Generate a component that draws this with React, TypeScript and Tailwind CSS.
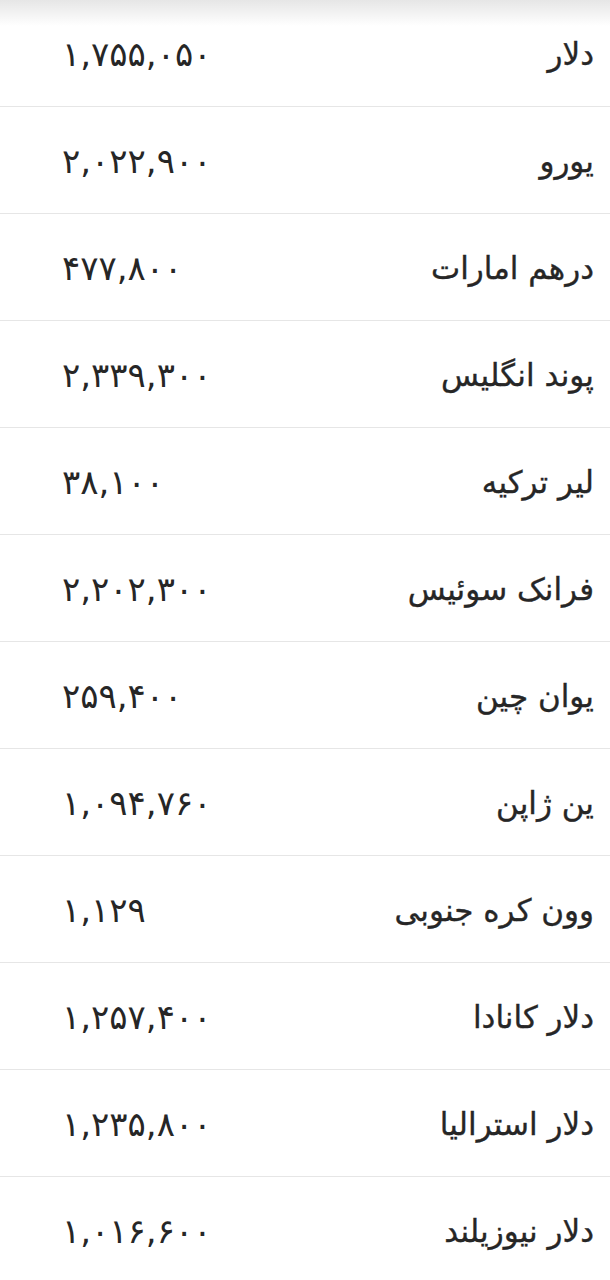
import React from "react";

type Rate = { name: string; price: string };

const rates: Rate[] = [
  { name: "دلار", price: "۱,۷۵۵,۰۵۰" },
  { name: "یورو", price: "۲,۰۲۲,۹۰۰" },
  { name: "درهم امارات", price: "۴۷۷,۸۰۰" },
  { name: "پوند انگلیس", price: "۲,۳۳۹,۳۰۰" },
  { name: "لیر ترکیه", price: "۳۸,۱۰۰" },
  { name: "فرانک سوئیس", price: "۲,۲۰۲,۳۰۰" },
  { name: "یوان چین", price: "۲۵۹,۴۰۰" },
  { name: "ین ژاپن", price: "۱,۰۹۴,۷۶۰" },
  { name: "وون کره جنوبی", price: "۱,۱۲۹" },
  { name: "دلار کانادا", price: "۱,۲۵۷,۴۰۰" },
  { name: "دلار استرالیا", price: "۱,۲۳۵,۸۰۰" },
  { name: "دلار نیوزیلند", price: "۱,۰۱۶,۶۰۰" },
];

const App = () => {
  return (
    <div
      className="relative w-[610px] h-[1280px] overflow-hidden bg-white text-[#262626]"
      style={{ fontFamily: '"DejaVu Sans", sans-serif' }}
    >
      {/* top shadow from the bar above */}
      <div className="absolute top-0 left-0 right-0 h-[26px] bg-gradient-to-b from-[#e6e6e6] to-white/0 pointer-events-none" />

      <div dir="rtl">
        {rates.map((rate) => (
          <div
            key={rate.name}
            className="flex items-center justify-between h-[107px] border-b border-[#e6e6e6] pr-[16px] pl-[62px] pt-[2px]"
          >
            <span className="text-[31px] leading-none [-webkit-text-stroke:0.35px_#262626]">
              {rate.name}
            </span>
            <span dir="ltr" className="text-[34px] leading-none">
              {rate.price}
            </span>
          </div>
        ))}
      </div>
    </div>
  );
};

export default App;
